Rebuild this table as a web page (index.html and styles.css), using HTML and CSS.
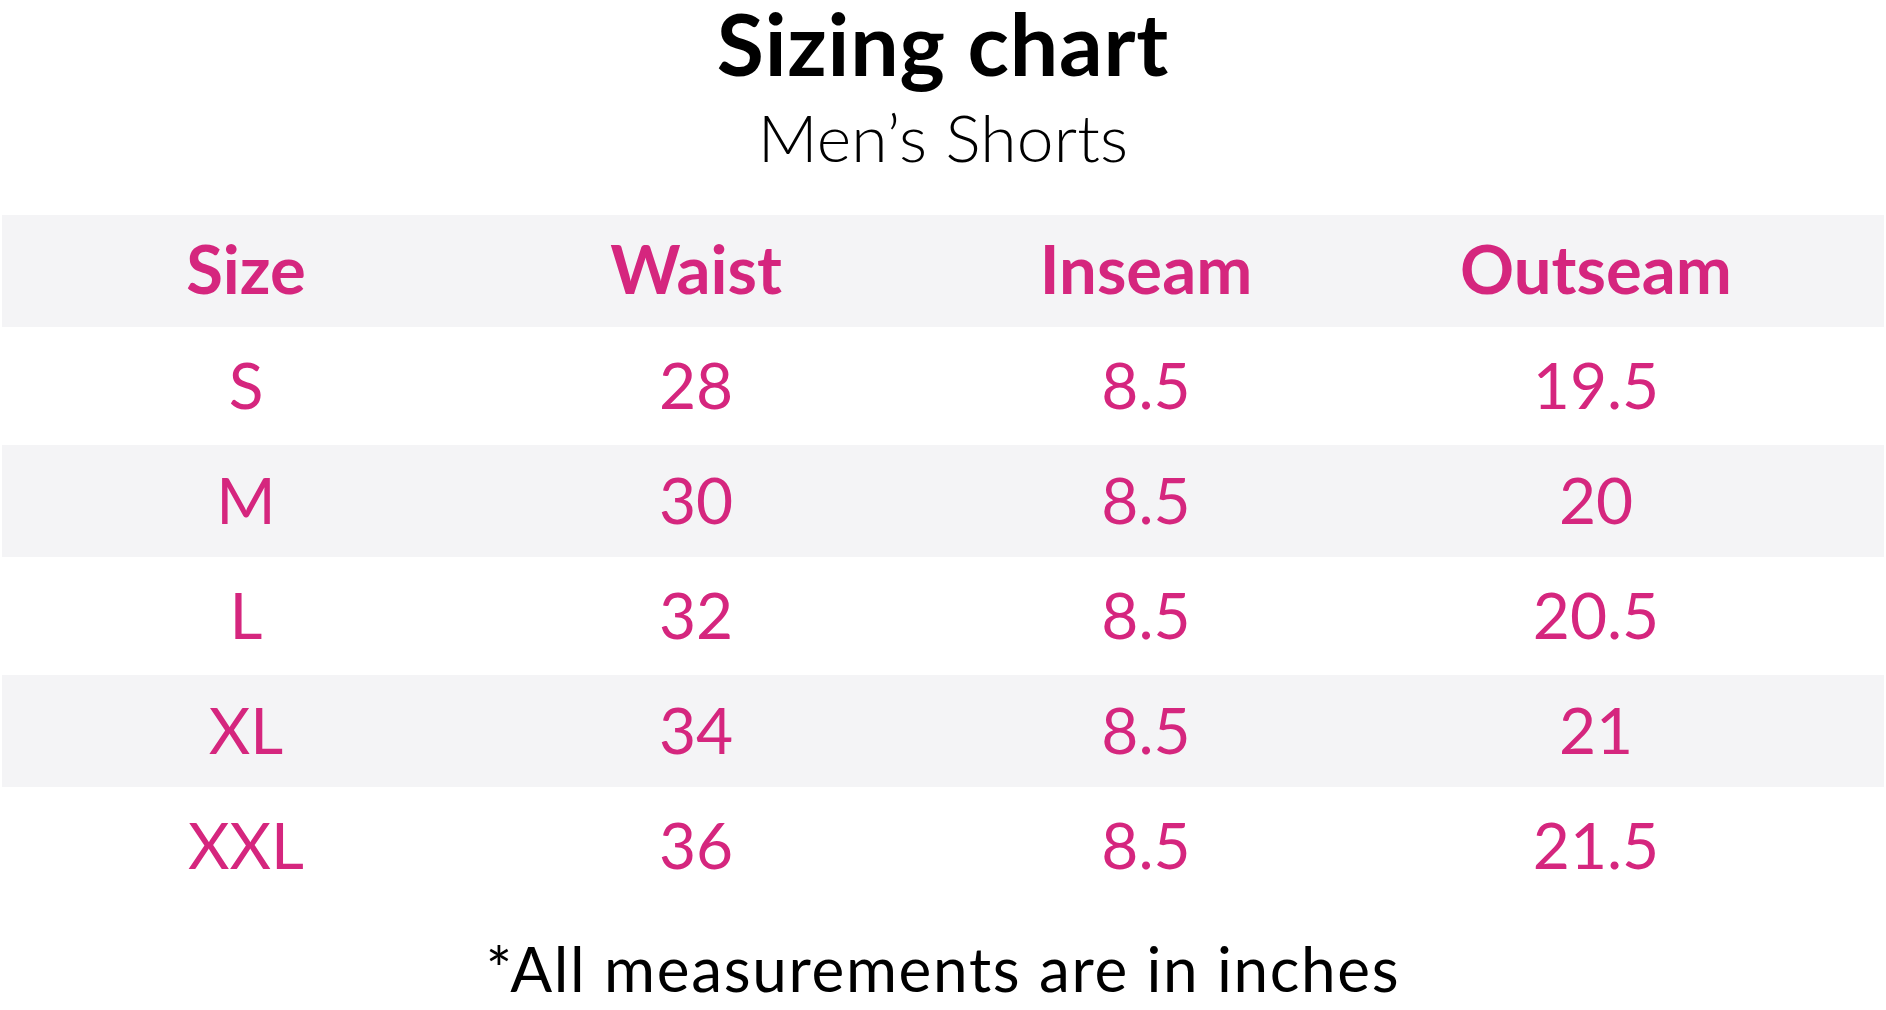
FILE: index.html
```html
<!DOCTYPE html>
<html lang="en">
<head>
<meta charset="utf-8">
<title>Sizing chart</title>
<link rel="stylesheet" href="styles.css">
</head>
<body>
<main class="page">
  <h1 class="title">Sizing chart</h1>
  <p class="subtitle">Men’s Shorts</p>
  <div class="chart">
    <div class="row head shade">
      <div class="cell">Size</div>
      <div class="cell">Waist</div>
      <div class="cell">Inseam</div>
      <div class="cell">Outseam</div>
    </div>
    <div class="row data plain">
      <div class="cell">S</div>
      <div class="cell">28</div>
      <div class="cell">8.5</div>
      <div class="cell">19.5</div>
    </div>
    <div class="row data shade">
      <div class="cell">M</div>
      <div class="cell">30</div>
      <div class="cell">8.5</div>
      <div class="cell">20</div>
    </div>
    <div class="row data plain">
      <div class="cell">L</div>
      <div class="cell">32</div>
      <div class="cell">8.5</div>
      <div class="cell">20.5</div>
    </div>
    <div class="row data shade">
      <div class="cell">XL</div>
      <div class="cell">34</div>
      <div class="cell">8.5</div>
      <div class="cell">21</div>
    </div>
    <div class="row data plain">
      <div class="cell">XXL</div>
      <div class="cell">36</div>
      <div class="cell">8.5</div>
      <div class="cell">21.5</div>
    </div>
  </div>
  <p class="note">*All measurements are in inches</p>
</main>
</body>
</html>
```

FILE: styles.css
```css
html, body {
  margin: 0;
  padding: 0;
  background: #ffffff;
}

.page {
  font-family: "Lato", "Liberation Sans", sans-serif;
  color: #000000;
  text-align: center;
}

.title {
  margin: 0;
  padding-top: 9px;
  font-size: 86px;
  line-height: 86px;
  font-weight: 700;
  letter-spacing: 0.8px;
  margin-top: -9px;
}

.subtitle {
  margin: 18px 0 0;
  font-size: 66px;
  line-height: 66px;
  font-weight: 300;
  letter-spacing: 0.2px;
}

.chart {
  margin: 45px 2px 0;
  display: flex;
  flex-direction: column;
}

.row {
  display: grid;
  grid-template-columns: repeat(4, 450px);
  padding-left: 19px;
  align-items: center;
  color: #d5267e;
}

.shade {
  background: #f4f4f6;
  height: 112px;
}

.plain {
  background: #ffffff;
  height: 118px;
}

.head .cell {
  font-size: 67px;
  font-weight: 700;
  padding-bottom: 6px;
}

.data .cell {
  font-size: 64px;
  font-weight: 400;
  padding-bottom: 4px;
}

.note {
  margin: 32px 0 0;
  font-size: 62px;
  line-height: 62px;
  font-weight: 400;
  letter-spacing: 1.7px;
}
```
